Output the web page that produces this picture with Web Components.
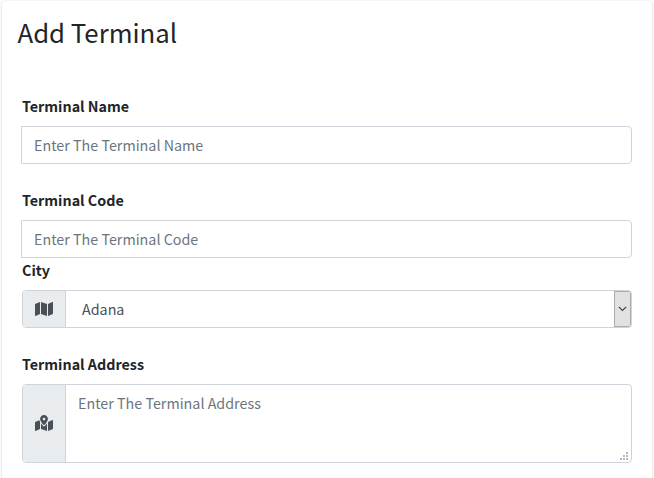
<!DOCTYPE html>
<html lang="en">
<head>
<meta charset="utf-8">
<title>Add Terminal</title>
<style>
html, body { margin: 0; height: 100%; overflow: hidden; background: #fdfdfd; }
body { font-family: "Noto Sans CJK SC", "Noto Sans", sans-serif; font-size: 14.32px; color: #212529; }
</style>
</head>
<body>
<terminal-card heading="Add Terminal">
  <form-field label="Terminal Name"><text-box>Enter The Terminal Name</text-box></form-field>
  <form-field label="Terminal Code" class="tight"><text-box>Enter The Terminal Code</text-box></form-field>
  <form-field label="City"><input-group><map-icon slot="icon"></map-icon><select-box>Adana</select-box></input-group></form-field>
  <form-field label="Terminal Address"><input-group><map-icon slot="icon" kind="marked"></map-icon><area-box>Enter The Terminal Address</area-box></input-group></form-field>
</terminal-card>
<script>
const define = (name, markup, setup) => customElements.define(name, class extends HTMLElement {
  constructor() {
    super();
    this.attachShadow({ mode: 'open' }).innerHTML = markup;
  }
  connectedCallback() { if (setup) setup(this, this.shadowRoot); }
});

define('terminal-card', `
<style>
:host { display: block; box-sizing: border-box; width: 650px; height: 500px; margin: 1px 0 0 2px; background: #fff; border-radius: 4px; box-shadow: 0 0 1px rgba(0,0,0,.125), 0 1px 3px rgba(0,0,0,.14); overflow: hidden; }
h1 { margin: 0; padding: 13px 15.5px 0; font-size: 25.75px; font-weight: 400; line-height: 35px; white-space: nowrap; }
.body { padding: 45px 20px 0; display: flex; flex-direction: column; }
</style>
<h1></h1><div class="body"><slot></slot></div>`,
(el, root) => { root.querySelector('h1').textContent = el.getAttribute('heading'); });

define('form-field', `
<style>
:host { display: block; margin-bottom: 24px; }
:host(.tight) { margin-bottom: 0; }
label { display: block; height: 24px; line-height: 24px; margin-bottom: 8px; font-weight: 700; }
</style>
<label></label><slot></slot>`,
(el, root) => { root.querySelector('label').textContent = el.getAttribute('label'); });

define('text-box', `
<style>
:host { display: block; box-sizing: border-box; height: 38px; margin-left: -1px; padding: 6px 12px; border: 1px solid #ced4da; border-radius: 0 4px 4px 0; line-height: 24px; color: #6c757d; }
</style>
<slot></slot>`);

define('input-group', `
<style>
:host { display: flex; box-sizing: border-box; border: 1px solid #ced4da; border-radius: 4px; overflow: hidden; }
.addon { display: flex; align-items: center; justify-content: center; width: 42px; background: #e9ecef; border-right: 1px solid #ced4da; color: #495057; }
.control { flex: 1; display: flex; }
</style>
<div class="addon"><slot name="icon"></slot></div><div class="control"><slot></slot></div>`);

define('select-box', `
<style>
:host { flex: 1; display: flex; height: 36px; color: #495057; }
.value { flex: 1; padding: 6px 16px; line-height: 24px; }
.arrow { display: flex; align-items: center; justify-content: center; box-sizing: border-box; width: 17px; border: 1px solid #adadad; background: #e1e1e1; }
svg { display: block; }
</style>
<div class="value"><slot></slot></div>
<div class="arrow"><svg width="9" height="6" viewBox="0 0 9 6"><path d="M.8.8 4.5 4.5 8.2.8" fill="none" stroke="#444" stroke-width="1.2"/></svg></div>`);

define('area-box', `
<style>
:host { flex: 1; display: flex; height: 77px; box-sizing: border-box; padding: 6px 2px 1px 12px; color: #6c757d; }
.text { flex: 1; line-height: 24px; }
svg { display: block; align-self: flex-end; }
</style>
<div class="text"><slot></slot></div>
<svg width="9" height="9" viewBox="0 0 9 9"><path fill="#b8b8b8" d="M6 0h2v2H6zM3 3h2v2H3zM6 3h2v2H6zM0 6h2v2H0zM3 6h2v2H3zM6 6h2v2H6z"/></svg>`);

const paths = {
  plain: 'M0 117.66v346.32c0 11.32 11.43 19.06 21.94 14.86L160 416V32L20.12 87.95A32.006 32.006 0 0 0 0 117.66zM192 416l192 64V96L192 32v384zM554.06 33.16L416 96v384l139.88-55.95A31.996 31.996 0 0 0 576 394.34V48.02c0-11.32-11.43-19.06-21.94-14.86z',
  marked: 'M288 0c-69.59 0-126 56.41-126 126 0 56.26 82.35 158.8 113.9 196.02 6.39 7.54 17.82 7.54 24.2 0C331.65 284.8 414 182.26 414 126 414 56.41 357.59 0 288 0zm0 168c-23.2 0-42-18.8-42-42s18.8-42 42-42 42 18.8 42 42-18.8 42-42 42zM20.12 215.95A32.006 32.006 0 0 0 0 245.66v250.32c0 11.32 11.43 19.06 21.94 14.86L160 448V214.92c-8.84-15.98-16.07-31.54-21.25-46.42L20.12 215.95zM288 359.67c-14.07 0-27.38-6.18-36.51-16.96-19.66-23.2-40.57-49.62-59.49-76.72v182l192 64V266c-18.92 27.09-39.82 53.52-59.49 76.72-9.13 10.77-22.44 16.95-36.51 16.95zm266.06-198.51L416 224v288l139.88-55.95A31.996 31.996 0 0 0 576 426.34V176.02c0-11.32-11.43-19.06-21.94-14.86z'
};
define('map-icon', `
<style>:host { display: block; } :host([kind="marked"]) { margin-bottom: 1px; } svg { display: block; }</style>
<svg width="18" height="16" viewBox="0 0 576 512"><path fill="currentColor"/></svg>`,
(el, root) => { root.querySelector('path').setAttribute('d', paths[el.getAttribute('kind') || 'plain']); });
</script>
</body>
</html>
